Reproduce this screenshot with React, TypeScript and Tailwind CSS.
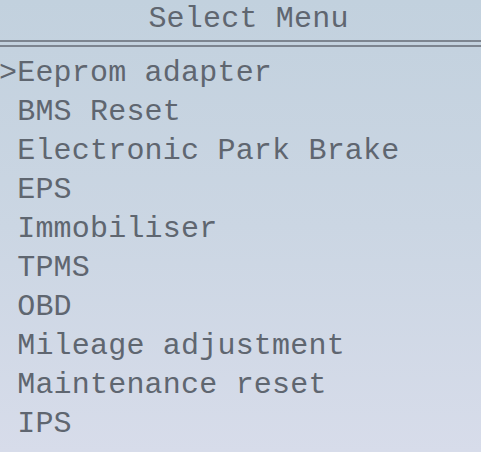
const items = [
  "Eeprom adapter",
  "BMS Reset",
  "Electronic Park Brake",
  "EPS",
  "Immobiliser",
  "TPMS",
  "OBD",
  "Mileage adjustment",
  "Maintenance reset",
  "IPS",
];

export default function App() {
  const selected = 0;

  return (
    <div className="h-[452px] w-[481px] overflow-hidden bg-gradient-to-b from-[#c2d1de] via-[#cbd6e3] to-[#d7dcea] font-['Liberation_Mono',monospace] text-[#5f6670]">
      <div className="flex h-[38px] items-center justify-center pl-[16px] text-[30px] leading-none tracking-[0.2px]">
        Select Menu
      </div>

      <div className="mt-[2px] flex flex-col gap-[3px]">
        <div className="h-[2px] bg-[#7d8590]" />
        <div className="h-[2px] bg-[#7d8590]" />
      </div>

      <ul className="mt-[7px] flex flex-col">
        {items.map((item, i) => (
          <li
            key={item}
            className="-ml-[1px] h-[39px] whitespace-pre text-[30px] leading-[39px] tracking-[0.2px]"
          >
            {i === selected ? ">" : " "}
            {item}
          </li>
        ))}
      </ul>
    </div>
  );
}
